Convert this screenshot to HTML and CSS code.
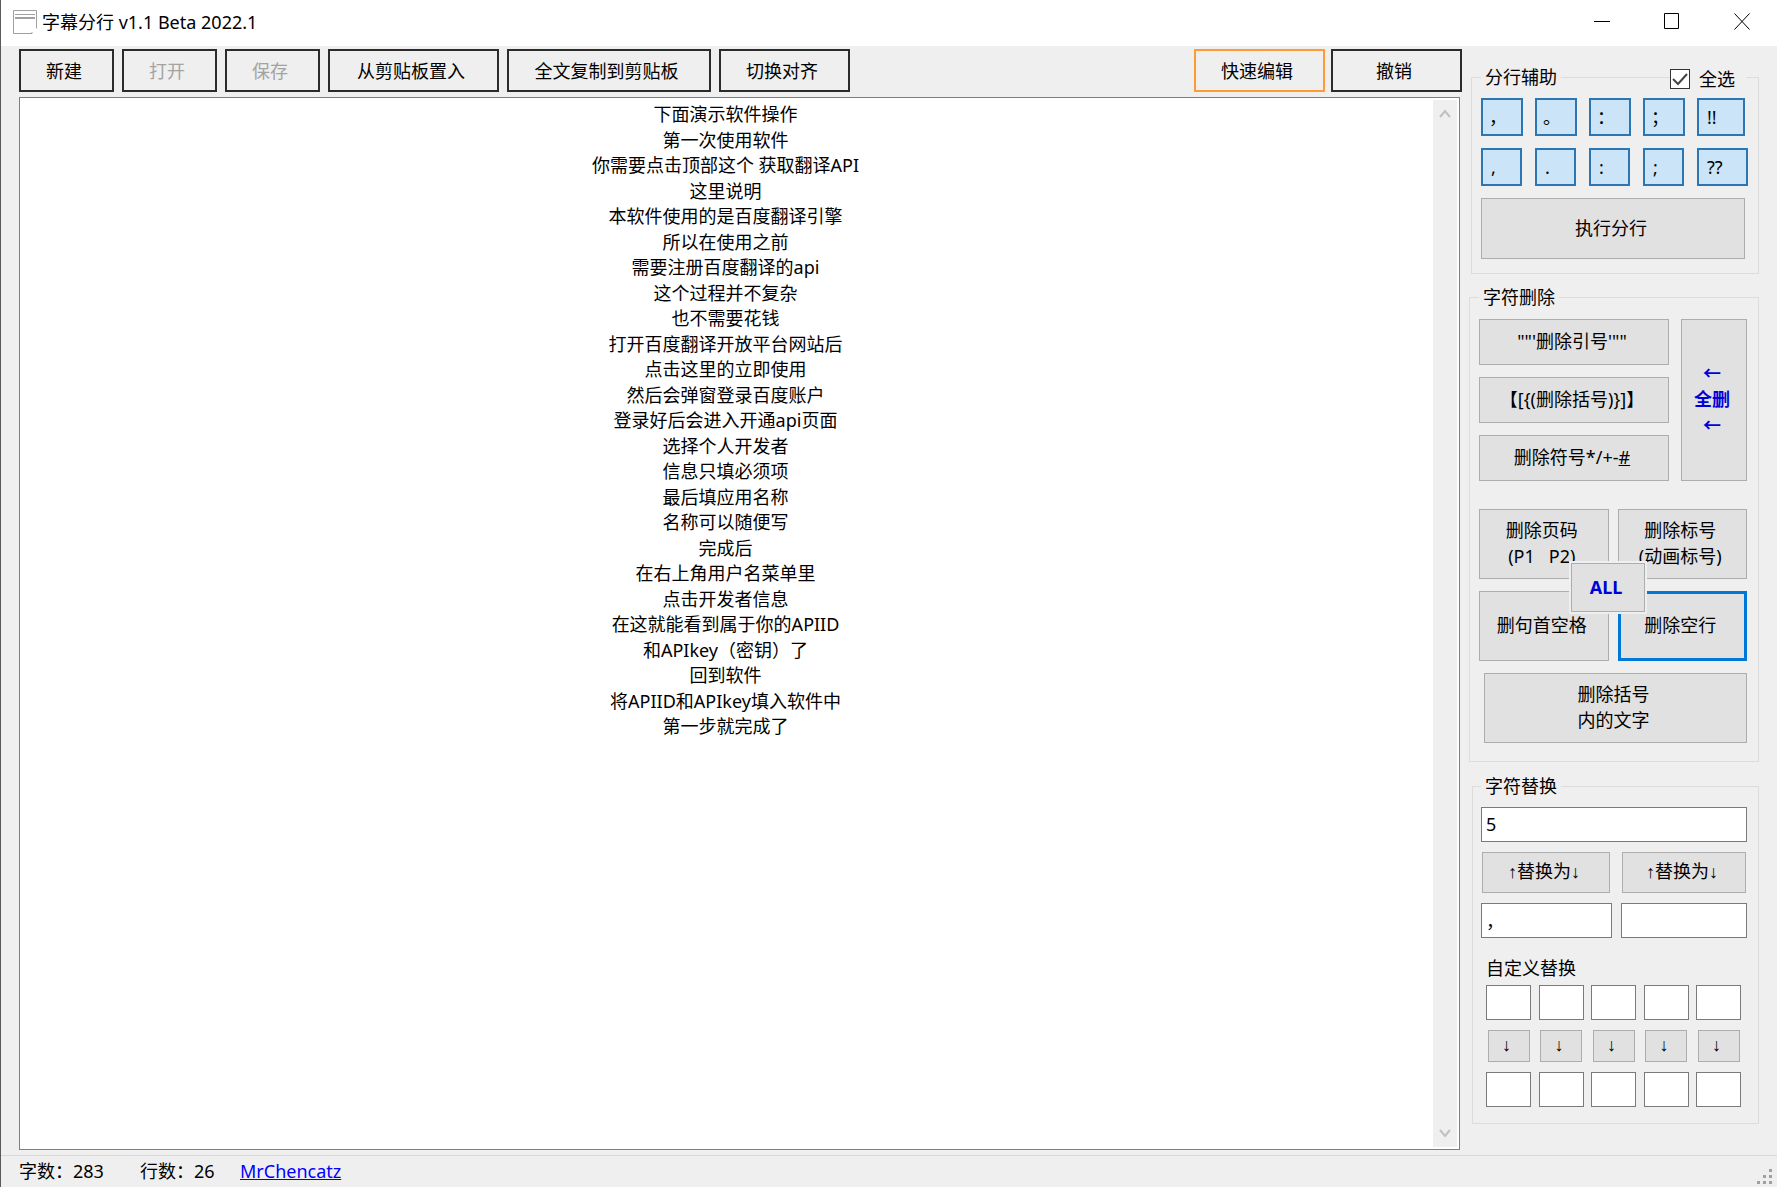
FILE: index.html
```html
<!DOCTYPE html>
<html lang="zh-CN">
<head>
<meta charset="utf-8">
<title>字幕分行 v1.1 Beta 2022.1</title>
<link rel="stylesheet" href="styles.css">
</head>
<body>
<div class="window">
  <header class="titlebar">
    <svg class="app-icon" width="24" height="24" viewBox="0 0 24 24" fill="none" stroke="#a0a0a0" aria-hidden="true"><path d="M23.500 18.500V.5H.5v23h18.500v-1.500M2 4.500h20M2 7.500h20M2 8.500h20"/></svg>
    <h1 class="title">字幕分行 v1.1 Beta 2022.1</h1>
    <div class="caption-buttons">
      <button class="caption" type="button" aria-label="最小化"><svg width="16" height="18" viewBox="0 0 16 18"><path d="M0 8.500h16" stroke="#000"/></svg></button>
      <button class="caption" type="button" aria-label="最大化"><svg width="16" height="18" viewBox="0 0 16 18"><path d="M.5 .5h14v15H.5z" stroke="#000" fill="none"/></svg></button>
      <button class="caption" type="button" aria-label="关闭"><svg width="16" height="18" viewBox="0 0 16 18"><path d="M.5 .5l15 16M15.500 .5l-15 16" stroke="#000" fill="none"/></svg></button>
    </div>
  </header>

  <div class="content">
    <main class="workspace">
      <div class="toolbar">
        <button class="tool" type="button">新建</button>
        <button class="tool" type="button" disabled>打开</button>
        <button class="tool" type="button" disabled>保存</button>
        <button class="tool tool-paste" type="button">从剪贴板置入</button>
        <button class="tool tool-copy" type="button">全文复制到剪贴板</button>
        <button class="tool tool-wide" type="button">切换对齐</button>
        <div class="toolbar-end">
          <button class="tool tool-wide tool-active" type="button">快速编辑</button>
          <button class="tool tool-wide" type="button">撤销</button>
        </div>
      </div>
      <div class="editor">
        <textarea class="editor-text" aria-label="字幕文本" spellcheck="false">下面演示软件操作
第一次使用软件
你需要点击顶部这个 获取翻译API
这里说明
本软件使用的是百度翻译引擎
所以在使用之前
需要注册百度翻译的api
这个过程并不复杂
也不需要花钱
打开百度翻译开放平台网站后
点击这里的立即使用
然后会弹窗登录百度账户
登录好后会进入开通api页面
选择个人开发者
信息只填必须项
最后填应用名称
名称可以随便写
完成后
在右上角用户名菜单里
点击开发者信息
在这就能看到属于你的APIID
和APIkey（密钥）了
回到软件
将APIID和APIkey填入软件中
第一步就完成了</textarea>
        <div class="scrollbar" aria-hidden="true">
          <svg width="12" height="12" viewBox="0 0 12 12"><path d="M1 10l5-6 5 6" fill="none" stroke="#bfbfbf" stroke-width="2"/></svg>
          <svg width="12" height="12" viewBox="0 0 12 12"><path d="M1 2l5 6 5-6" fill="none" stroke="#bfbfbf" stroke-width="2"/></svg>
        </div>
      </div>
    </main>

    <aside class="sidebar">
      <fieldset class="group group-split">
        <legend>分行辅助</legend>
        <label class="select-all"><input type="checkbox" checked><span>全选</span></label>
        <div class="toggles toggles-full">
          <button class="toggle" type="button" aria-pressed="true">，</button>
          <button class="toggle" type="button" aria-pressed="true">。</button>
          <button class="toggle" type="button" aria-pressed="true">：</button>
          <button class="toggle" type="button" aria-pressed="true">；</button>
          <button class="toggle toggle-pair" type="button" aria-pressed="true">!!</button>
        </div>
        <div class="toggles toggles-half">
          <button class="toggle" type="button" aria-pressed="true">,</button>
          <button class="toggle" type="button" aria-pressed="true">.</button>
          <button class="toggle" type="button" aria-pressed="true">:</button>
          <button class="toggle" type="button" aria-pressed="true">;</button>
          <button class="toggle toggle-pair" type="button" aria-pressed="true">??</button>
        </div>
        <button class="btn btn-run" type="button">执行分行</button>
      </fieldset>

      <fieldset class="group group-delete">
        <legend>字符删除</legend>
        <div class="delete-symbols">
          <div class="stack">
            <button class="btn" type="button">""'删除引号'""</button>
            <button class="btn" type="button">【[{(删除括号)}]】</button>
            <button class="btn" type="button">删除符号*/+-<u>#</u></button>
          </div>
          <button class="btn btn-strong" type="button">←<br>全删<br>←</button>
        </div>
        <div class="delete-marks">
          <button class="btn" type="button">删除页码<br>(P1 &nbsp; P2)</button>
          <button class="btn" type="button">删除标号<br>(动画标号)</button>
          <button class="btn" type="button">删句首空格</button>
          <button class="btn btn-focus" type="button">删除空行</button>
          <button class="btn btn-strong btn-all" type="button">ALL</button>
        </div>
        <button class="btn btn-inner" type="button">删除括号<br>内的文字</button>
      </fieldset>

      <fieldset class="group group-replace">
        <legend>字符替换</legend>
        <input class="field" type="text" value="5" aria-label="查找内容">
        <div class="pair pair-buttons">
          <button class="btn arrows" type="button">↑替换为↓</button>
          <button class="btn arrows" type="button">↑替换为↓</button>
        </div>
        <div class="pair">
          <input class="field" type="text" value="，" aria-label="替换内容一">
          <input class="field" type="text" aria-label="替换内容二">
        </div>
        <p class="custom-title">自定义替换</p>
        <div class="custom">
          <input class="field" type="text" aria-label="查找 1"><input class="field" type="text" aria-label="查找 2"><input class="field" type="text" aria-label="查找 3"><input class="field" type="text" aria-label="查找 4"><input class="field" type="text" aria-label="查找 5">
          <button class="btn arrows" type="button">↓</button><button class="btn arrows" type="button">↓</button><button class="btn arrows" type="button">↓</button><button class="btn arrows" type="button">↓</button><button class="btn arrows" type="button">↓</button>
          <input class="field" type="text" aria-label="替换 1"><input class="field" type="text" aria-label="替换 2"><input class="field" type="text" aria-label="替换 3"><input class="field" type="text" aria-label="替换 4"><input class="field" type="text" aria-label="替换 5">
        </div>
      </fieldset>
    </aside>
  </div>

  <footer class="statusbar">
    <span class="chars">字数：283</span>
    <span class="lines">行数：26</span>
    <a href="#author">MrChencatz</a>
    <svg class="grip" width="16" height="16" viewBox="0 0 16 16" fill="#a0a0a0" aria-hidden="true"><path d="M12 0h3v3h-3zM6 6h3v3H6zM12 6h3v3h-3zM0 12h3v3H0zM6 12h3v3H6zM12 12h3v3h-3z"/></svg>
  </footer>
</div>
</body>
</html>
```
FILE: styles.css
```css
* {
  box-sizing: border-box;
}

body {
  margin: 0;
  color: #000;
  background: #efefef;
  font: 18px/26px "Noto Sans", "Noto Sans CJK SC", sans-serif;
}

button,
input,
textarea {
  margin: 0;
  color: inherit;
  font: inherit;
  border-radius: 0;
}

.window {
  display: flex;
  flex-direction: column;
  min-height: 100vh;
  border-left: 1px solid #5a5a5a;
}

/* Title bar */

.titlebar {
  display: flex;
  align-items: center;
  gap: 5px;
  height: 46px;
  padding: 0 0 2px 12px;
  background: #fff;
}

.title {
  margin: 0;
  font-size: 18px;
  font-weight: 400;
}

.caption-buttons {
  display: flex;
  margin-left: auto;
}

.caption {
  display: flex;
  align-items: center;
  justify-content: center;
  width: 70px;
  height: 44px;
  padding: 0;
  border: 0;
  background: none;
}

/* Main area */

.content {
  display: grid;
  grid-template-columns: minmax(0, 1fr) 290px;
  flex: 1;
  gap: 7px;
  padding: 3px 18px 5px;
}

.workspace {
  display: flex;
  flex-direction: column;
  gap: 5px;
}

.toolbar {
  display: flex;
  gap: 8px;
}

.toolbar-end {
  display: flex;
  gap: 6px;
  margin-left: auto;
}

.tool {
  width: 95px;
  height: 43px;
  padding: 0 5px 0 0;
  border: 2px solid #2b2b2b;
  background: #efefef;
}

.tool:disabled {
  color: #a3a3a3;
}

.tool-paste {
  width: 171px;
}

.tool-copy {
  width: 204px;
}

.tool-wide {
  width: 131px;
}

.tool-active {
  border-color: #ff9a35;
}

.editor {
  display: flex;
  flex: 1;
  margin-right: 2px;
  padding: 2px;
  border: 1px solid #7f7f7f;
  background: #fff;
}

.editor-text {
  flex: 1;
  padding: 2px 4px 2px 0;
  border: 0;
  outline: 0;
  resize: none;
  overflow: hidden;
  background: #fff;
  line-height: 1.417;
  text-align: center;
}

.scrollbar {
  display: flex;
  flex-direction: column;
  align-items: center;
  justify-content: space-between;
  width: 24px;
  padding: 7px 0;
  background: #efefef;
}

/* Side panel */

.group {
  position: relative;
  min-width: 0;
  margin: 0;
  border: 1px solid #dcdcdc;
}

.group legend {
  height: 26px;
  padding: 0 4px;
}

.group-split {
  height: 210px;
  margin: 15px 0 10px 2px;
  padding: 8px 8px 0 9px;
}

.group-delete {
  height: 478px;
  margin-bottom: 11px;
  padding: 9px 11px 0 9px;
}

.group-replace {
  height: 351px;
  margin-left: 3px;
  padding: 8px 11px 0 8px;
}

.btn {
  display: block;
  padding: 0 4px 2px 0;
  border: 1px solid #adadad;
  background: #e1e1e1;
}

.arrows {
  font-family: "Liberation Sans", "Noto Sans CJK SC", sans-serif;
}

.select-all {
  position: absolute;
  top: -24px;
  right: 12px;
  display: flex;
  align-items: center;
  height: 26px;
  padding-right: 11px;
  background: #efefef;
}

.select-all input {
  appearance: none;
  width: 20px;
  height: 20px;
  margin-right: 9px;
  border: 1px solid #333;
  background: #fff url("data:image/svg+xml,%3Csvg xmlns='http://www.w3.org/2000/svg' viewBox='0 0 18 18'%3E%3Cpath d='M2 9l5 5 9-10' fill='none' stroke='%23444' stroke-width='2'/%3E%3C/svg%3E");
}

.toggles {
  display: grid;
  grid-template-columns: repeat(4, 54px) 1fr;
  margin-bottom: 12px;
}

.toggle {
  width: 42px;
  height: 38px;
  padding: 0 0 0 8px;
  border: 2px solid #2b76b3;
  background: #cce4f7;
  text-align: left;
}

.toggles-full .toggle {
  padding-left: 6px;
}

.toggles-half .toggle {
  width: 41px;
}

.toggles-full .toggle-pair {
  width: 48px;
  padding-left: 8px;
}

.toggles-half .toggle-pair {
  width: 51px;
}

.btn-run {
  width: 264px;
  height: 61px;
}

.delete-symbols {
  display: grid;
  grid-template-columns: 1fr 66px;
  gap: 12px;
}

.stack {
  display: grid;
  gap: 12px;
}

.stack .btn {
  height: 46px;
}

.btn-strong {
  color: #0000d8;
  font-weight: 700;
}

.delete-marks {
  position: relative;
  display: grid;
  grid-template-columns: 1fr 1fr;
  gap: 12px 9px;
  margin: 28px 0 12px;
}

.delete-marks .btn {
  height: 70px;
}

.delete-marks .btn-focus {
  border: 3px solid #0078d7;
}

.delete-marks .btn-all {
  position: absolute;
  top: 54px;
  left: 92px;
  width: 74px;
  height: 49px;
  outline: 2px solid #efefef;
}

.btn-inner {
  width: 263px;
  height: 70px;
  margin-left: auto;
}

.field {
  display: block;
  width: 100%;
  min-width: 0;
  height: 35px;
  padding: 0 4px 2px;
  border: 1px solid #7a7a7a;
  outline: 0;
  background: #fff;
}

.pair {
  display: grid;
  grid-template-columns: 131px 1fr;
  gap: 9px;
  margin-top: 10px;
}

.pair-buttons {
  grid-template-columns: 128px 1fr;
  gap: 12px;
  padding: 0 1px;
}

.pair .btn {
  height: 41px;
}

.custom-title {
  margin: 17px 0 4px 5px;
}

.custom {
  display: grid;
  grid-template-columns: repeat(5, 45px);
  justify-content: space-between;
  justify-items: center;
  gap: 10px 0;
  padding: 0 6px 0 5px;
}

.custom .btn {
  width: 42px;
  height: 32px;
}

/* Status bar */

.statusbar {
  display: flex;
  align-items: center;
  height: 32px;
  padding: 0 4px 2px 18px;
  border-top: 1px solid #d7d7d7;
}

.chars {
  width: 121px;
}

.lines {
  width: 100px;
}

.statusbar a {
  color: #00f;
}

.grip {
  align-self: flex-end;
  margin-left: auto;
}
```
